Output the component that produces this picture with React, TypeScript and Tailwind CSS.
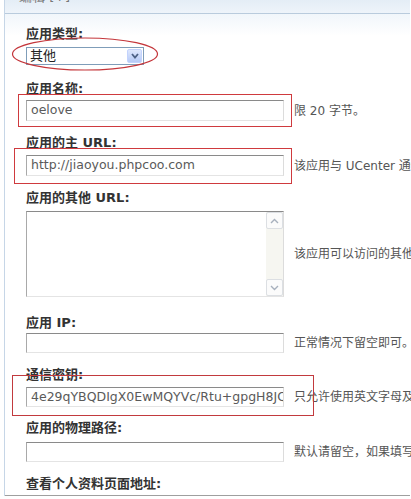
import React from 'react';

const font = "font-['DejaVu_Sans','Noto_Sans_CJK_SC',sans-serif]";

function Label({ text, mt, mb }: { text: string; mt: string; mb: string }) {
  return (
    <div className={`${mt} ${mb} h-[16px] leading-[16px] text-[13px] font-bold text-[#333]`}>{text}</div>
  );
}

function Field({ value, hint, h = 'h-[21px]' }: { value?: string; hint?: string; h?: string }) {
  return (
    <div className="flex items-center gap-[10px]">
      <div
        className={`w-[258px] ${h} shrink-0 overflow-hidden whitespace-nowrap border border-t-[#8a8a8a] border-l-[#a9a9a9] border-r-[#dcdcdc] border-b-[#e4e4e4] bg-white pl-[4px] text-[12.5px] leading-[18px] text-[#5a5a5a]`}
      >
        {value}
      </div>
      {hint && <span className="whitespace-nowrap text-[12px] text-[#555]">{hint}</span>}
    </div>
  );
}

function Chevron({ up }: { up?: boolean }) {
  return (
    <svg width="9" height="6" viewBox="0 0 9 6">
      <path
        d={up ? 'M1 5 L4.5 1.5 L8 5' : 'M1 1 L4.5 4.5 L8 1'}
        fill="none"
        stroke="#a7b0bd"
        strokeWidth="1.4"
      />
    </svg>
  );
}

export default function App() {
  return (
    <div className={`relative w-[411px] h-[499px] overflow-hidden bg-white ${font}`}>
      <div className="ml-[4px] w-[406px] border-l border-[#c6d6e7]">
        {/* header strip, title cut off by the top edge */}
        <div className="h-[14px] overflow-hidden border-b border-[#b9cbdd] bg-gradient-to-b from-[#e4edf6] to-[#eef4fa]">
          <div className="-mt-[11px] pl-[14px] text-[13px] leading-[16px] text-[#777]">编辑 [+]</div>
        </div>

        <div className="border-b border-[#9f9f9f] bg-[linear-gradient(#f1f6fb,#fff_22px)] pl-[21px] pt-[12px] pb-[3px]">
          <Label text="应用类型:" mt="mt-0" mb="mb-[5px]" />
          <div className="flex h-[18px] w-[118px] items-center border border-[#7f9db9] bg-white">
            <span className="flex-1 pl-[3px] text-[13px] leading-[16px] text-[#222]">其他</span>
            <div className="m-[1px] flex h-[14px] w-[15px] items-center justify-center rounded-[2px] border border-[#c3d3fd] bg-gradient-to-b from-[#dfe8fd] to-[#b6caf6]">
              <svg width="8" height="6" viewBox="0 0 8 6">
                <path d="M1 1 L4 4.5 L7 1" fill="none" stroke="#4d6185" strokeWidth="1.8" />
              </svg>
            </div>
          </div>

          <Label text="应用名称:" mt="mt-[16px]" mb="mb-[3px]" />
          <Field value="oelove" hint="限 20 字节。" />

          <Label text="应用的主 URL:" mt="mt-[14px]" mb="mb-[4px]" />
          <Field value="http://jiaoyou.phpcoo.com" hint="该应用与 UCenter 通信的接口地址" />

          <Label text="应用的其他 URL:" mt="mt-[14px]" mb="mb-[5px]" />
          <div className="flex items-center gap-[10px]">
            <div className="flex h-[86px] w-[258px] shrink-0 border border-t-[#8a8a8a] border-l-[#a9a9a9] border-r-[#dcdcdc] border-b-[#e4e4e4] bg-white">
              <div className="flex-1" />
              <div className="flex w-[17px] flex-col justify-between bg-[#f6f6f1]">
                <div className="flex h-[17px] items-center justify-center rounded-[2px] border border-[#dcdfe3] bg-[#fbfbfb]">
                  <Chevron up />
                </div>
                <div className="flex h-[17px] items-center justify-center rounded-[2px] border border-[#dcdfe3] bg-[#fbfbfb]">
                  <Chevron />
                </div>
              </div>
            </div>
            <span className="whitespace-nowrap text-[12px] text-[#555]">该应用可以访问的其他地址</span>
          </div>

          <Label text="应用 IP:" mt="mt-[18px]" mb="mb-[2px]" />
          <Field h="h-[20px]" hint="正常情况下留空即可。" />

          <Label text="通信密钥:" mt="mt-[14px]" mb="mb-[4px]" />
          <Field h="h-[20px]" value="4e29qYBQDIgX0EwMQYVc/Rtu+gpgH8JQ" hint="只允许使用英文字母及数字" />

          <Label text="应用的物理路径:" mt="mt-[13px]" mb="mb-[6px]" />
          <Field h="h-[20px]" hint="默认请留空，如果填写" />

          <Label text="查看个人资料页面地址:" mt="mt-[14px]" mb="mb-0" />
        </div>
      </div>

      {/* red annotation marks drawn over the form */}
      <svg className="pointer-events-none absolute left-[10px] top-[36px]" width="150" height="36" viewBox="0 0 150 36">
        <ellipse cx="75" cy="18" rx="72.5" ry="16" fill="none" stroke="#c4363b" strokeWidth="1.2" />
      </svg>
      <div className="pointer-events-none absolute left-[18px] top-[94px] h-[33px] w-[274px] border-[1.5px] border-[#cf3a3e]" />
      <div className="pointer-events-none absolute left-[14px] top-[148px] h-[36px] w-[278px] border-[1.5px] border-[#cf3a3e]" />
      <div className="pointer-events-none absolute left-[12px] top-[375px] h-[41px] w-[302px] border-[1.5px] border-[#c23a3e]" />
    </div>
  );
}
